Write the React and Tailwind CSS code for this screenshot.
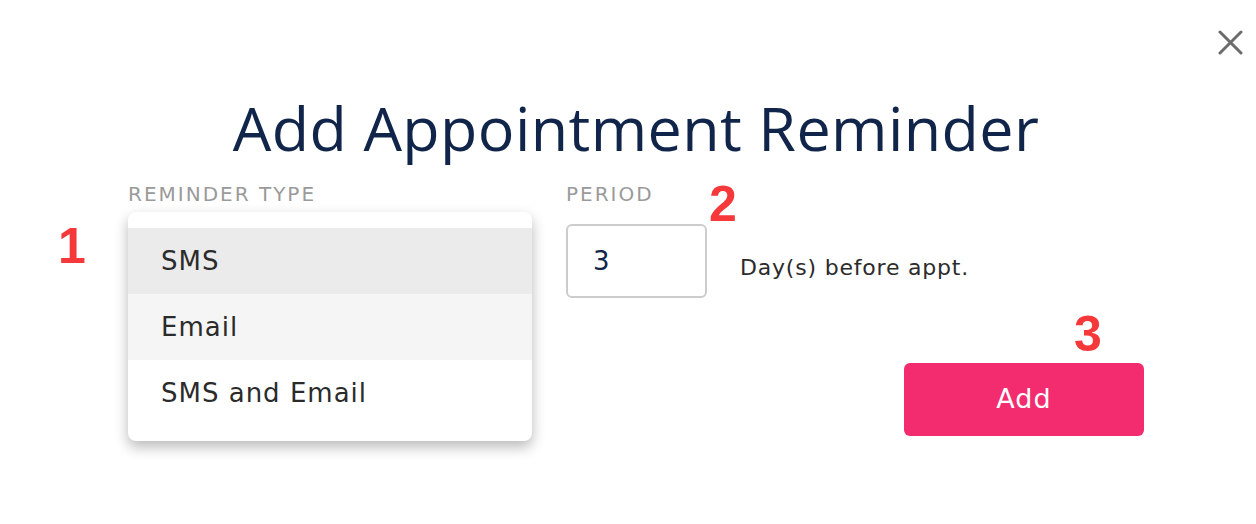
const options = [
  { label: "SMS", tone: "bg-[#ebebeb]" },
  { label: "Email", tone: "bg-[#f5f5f5]" },
  { label: "SMS and Email", tone: "bg-white" },
];

const body = { fontFamily: '"DejaVu Sans", "Open Sans", sans-serif' };
const mark = { fontFamily: '"Liberation Sans", Arial, sans-serif' };

function Mark({ className, children }) {
  return (
    <span className={`absolute text-[50px] font-bold leading-none text-[#f5383a] ${className}`} style={mark}>
      {children}
    </span>
  );
}

export default function App() {
  return (
    <div className="relative h-[524px] w-full overflow-hidden bg-white" style={body}>
      <button className="absolute right-[13px] top-[30px]">
        <svg width="25" height="25" viewBox="0 0 25 25" fill="none" stroke="#6b6b6b" strokeWidth="3" strokeLinecap="round">
          <path d="M2 2 L23 23 M23 2 L2 23" />
        </svg>
      </button>

      <div className="pt-[88px]">
        <h1
          className="pl-[16px] text-center text-[61px] font-normal leading-[80px] tracking-[0.4px] text-[#11254a]"
          style={{ fontFamily: '"Open Sans", sans-serif' }}
        >
          Add Appointment Reminder
        </h1>

        <div className="ml-[128px] mt-[13px] w-[1016px]">
          <div className="flex items-start">
            <div className="relative w-[404px]">
              <div className="text-[20px] leading-[26px] tracking-[2px] text-[#9a9a9a]">REMINDER TYPE</div>
              <div className="mt-[17px] h-[64px] rounded-[6px] border-2 border-[#11254a] bg-white" />
              <div className="absolute left-0 top-[31px] z-10 w-[404px] overflow-hidden rounded-[8px] bg-white pb-[15px] pt-[16px] shadow-[0_6px_14px_rgba(0,0,0,0.28)]">
                {options.map((o) => (
                  <div
                    key={o.label}
                    className={`flex h-[66px] items-center pl-[33px] text-[26px] tracking-[1px] text-[#2b2b2b] ${o.tone}`}
                  >
                    {o.label}
                  </div>
                ))}
              </div>
            </div>

            <div className="ml-[34px] w-[141px]">
              <div className="text-[20px] leading-[26px] tracking-[2px] text-[#9a9a9a]">PERIOD</div>
              <div className="mt-[17px] flex h-[74px] items-center rounded-[6px] border-2 border-[#cccccc] pl-[25px] text-[26px] text-[#11254a]">
                3
              </div>
            </div>

            <div className="ml-[33px] mt-[72px] text-[22px] leading-[30px] tracking-[0.8px] text-[#2b2b2b]">
              Day(s) before appt.
            </div>
          </div>

          <div className="mt-[65px] flex justify-end">
            <button className="h-[73px] w-[240px] rounded-[6px] bg-[#f22c6f] text-[27px] tracking-[1px] text-white">
              Add
            </button>
          </div>
        </div>
      </div>

      <Mark className="left-[58px] top-[221px]">1</Mark>
      <Mark className="left-[709px] top-[179px]">2</Mark>
      <Mark className="left-[1074px] top-[309px]">3</Mark>
    </div>
  );
}
